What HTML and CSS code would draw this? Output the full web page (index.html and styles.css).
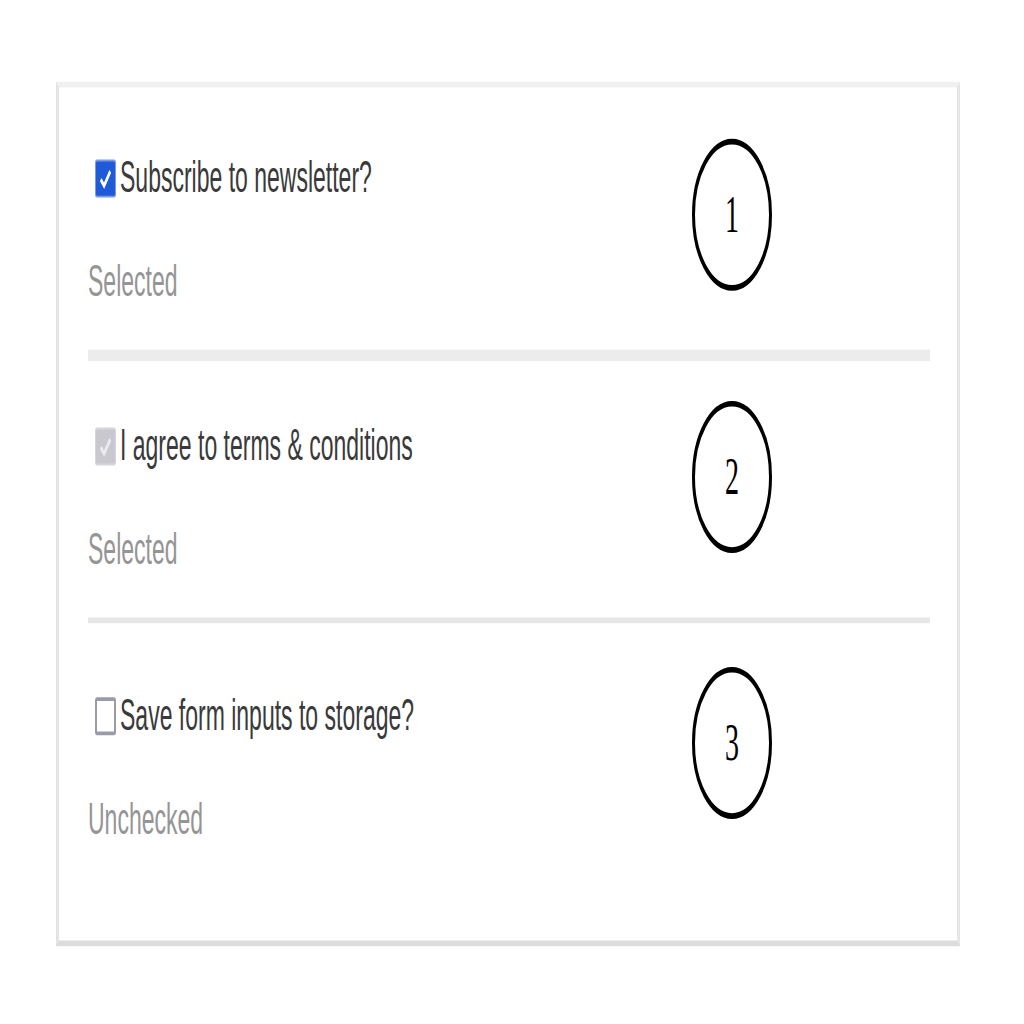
FILE: index.html
```html
<!DOCTYPE html>
<html lang="en">
<head>
<meta charset="utf-8">
<title>Checkbox states</title>
<link rel="stylesheet" href="styles.css">
</head>
<body>
<div class="stage">
  <div class="card">
    <div class="row row--first">
      <div class="field field--first">
        <label class="label">
          <span class="box box--checked"><svg viewBox="0 0 20 20" width="20" height="20"><path d="M5 10.5 L8.5 14 L15 6" fill="none" stroke="#fff" stroke-width="2.4"/></svg></span>
          <span class="text">Subscribe to newsletter?</span>
        </label>
        <div class="status">Selected</div>
      </div>
      <div class="badge">1</div>
    </div>
    <div class="divider divider--thick"></div>
    <div class="row row--second">
      <div class="field">
        <label class="label">
          <span class="box box--disabled"><svg viewBox="0 0 20 20" width="20" height="20"><path d="M5 10.5 L8.5 14 L15 6" fill="none" stroke="#ececf0" stroke-width="2.4"/></svg></span>
          <span class="text">I agree to terms &amp; conditions</span>
        </label>
        <div class="status">Selected</div>
      </div>
      <div class="badge">2</div>
    </div>
    <div class="divider divider--thin"></div>
    <div class="row row--third">
      <div class="field field--third">
        <label class="label">
          <span class="box box--empty"></span>
          <span class="text">Save form inputs to storage?</span>
        </label>
        <div class="status">Unchecked</div>
      </div>
      <div class="badge">3</div>
    </div>
  </div>
</div>
</body>
</html>
```
FILE: styles.css
```css
html {
  margin: 0;
  padding: 0;
  background: #ffffff;
  overflow: hidden;
}

body {
  margin: 0;
  padding: 0;
  height: 1024px;
  background: #ffffff;
}

.stage {
  width: 1024px;
  padding: 43px 0 0 56px;
  box-sizing: border-box;
  transform: scaleY(1.9);
  transform-origin: 0 0;
  font-family: "Liberation Sans", Arial, sans-serif;
}

.card {
  width: 904px;
  box-sizing: border-box;
  border-top: 3px solid #f0f0f0;
  border-left: 3px solid #e4e4e4;
  border-right: 3px solid #e6e6e6;
  border-bottom: 3px solid #dcdcdc;
  padding: 0 27px 0 29px;
  background: #fff;
}

.row {
  display: grid;
  grid-template-columns: 604px 80px;
  align-items: start;
}

.row--first { padding: 27px 0 25px; }
.row--second { padding: 21px 0 25px; }
.row--third { padding: 23px 0 53px; }

.field { margin-top: 13px; }
.field--first { margin-top: 10px; }
.field--third { margin-top: 15px; }

.label {
  display: flex;
  align-items: center;
  gap: 4px;
  height: 21px;
  margin-left: 7px;
}

.text {
  font-size: 23px;
  line-height: 21px;
  color: #3a3a3a;
  white-space: nowrap;
}

.box {
  width: 21px;
  height: 20px;
  box-sizing: border-box;
  border-radius: 2px;
  display: flex;
  align-items: center;
  justify-content: center;
  flex: none;
}

.box svg { display: block; }

.box--checked {
  background: #1f5ad8;
  border: 1px solid #7f98e6;
}

.box--disabled {
  background: #c8c8ce;
  border: 1px solid #d6d6dc;
}

.box--empty {
  background: #fff;
  border: 2px solid #9a9aa8;
}

.status {
  margin-top: 34px;
  font-size: 23px;
  line-height: 21px;
  color: #959595;
  white-space: nowrap;
}

.badge {
  width: 80px;
  height: 80px;
  box-sizing: border-box;
  border: 3px solid #000;
  border-radius: 50%;
  display: flex;
  align-items: center;
  justify-content: center;
  font-family: "Liberation Serif", "Times New Roman", serif;
  font-size: 28px;
  color: #000;
}

.divider { background: #ececec; }
.divider--thick { height: 6px; }
.divider--thin { height: 3px; background: #e6e6e6; }
```
